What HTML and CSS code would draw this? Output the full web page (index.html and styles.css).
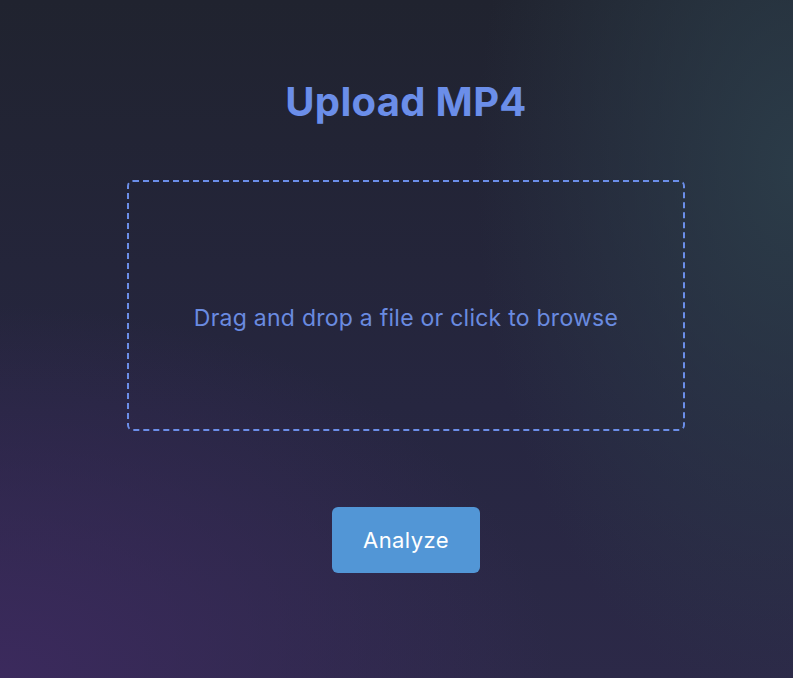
FILE: index.html
```html
<!DOCTYPE html>
<html lang="en">
<head>
<meta charset="utf-8">
<title>Upload MP4</title>
<link rel="stylesheet" href="styles.css">
</head>
<body>
<main class="page">
  <h1 class="title">Upload MP4</h1>
  <div class="dropzone">
    <p class="dropzone-text">Drag and drop a file or click to browse</p>
  </div>
  <button class="analyze-btn" type="button">Analyze</button>
</main>
</body>
</html>
```
FILE: styles.css
```css
html, body {
  margin: 0;
  height: 100%;
}
body {
  font-family: Inter, "Noto Sans", sans-serif;
  background:
    radial-gradient(ellipse 70% 55% at 0% 100%, rgba(60, 42, 94, 0.95) 0%, rgba(60, 42, 94, 0) 100%),
    radial-gradient(ellipse 40% 80% at 100% 25%, rgba(44, 62, 74, 0.9) 0%, rgba(44, 62, 74, 0) 100%),
    linear-gradient(180deg, #20232f 0%, #262640 60%, #2c2948 100%);
  overflow: hidden;
}
.page {
  display: flex;
  flex-direction: column;
  align-items: center;
  padding: 79px 0 0 19px;
}
.title {
  margin: 0;
  font-size: 40px;
  line-height: 46px;
  font-weight: 700;
  color: #6b8ee9;
  letter-spacing: 0.3px;
}
.dropzone {
  box-sizing: border-box;
  margin-top: 55px;
  width: 558px;
  height: 251px;
  border: 2px dashed #6b8ee9;
  border-radius: 6px;
  display: flex;
  align-items: center;
  justify-content: center;
  padding-top: 25px;
}
.dropzone-text {
  margin: 0;
  font-size: 23px;
  line-height: 28px;
  color: #6a8be0;
  letter-spacing: 0.25px;
}
.analyze-btn {
  margin-top: 76px;
  width: 148px;
  height: 66px;
  border: none;
  border-radius: 6px;
  background: #5296d6;
  color: #ffffff;
  font-family: Inter, "Noto Sans", sans-serif;
  font-size: 22px;
  font-weight: 400;
  letter-spacing: 0.4px;
  padding: 0;
}
```
